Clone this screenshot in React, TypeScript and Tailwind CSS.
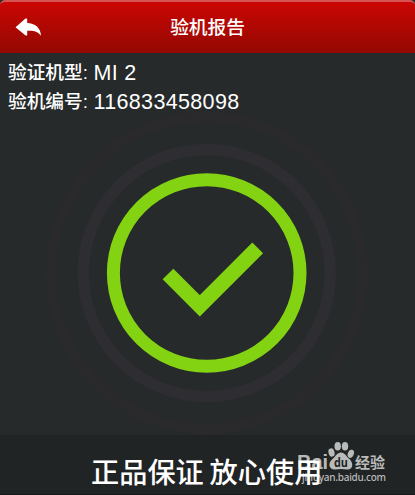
const CHECK_COLOR = '#83d313';

const details = [
  { label: '验证机型', value: 'MI 2' },
  { label: '验机编号', value: '116833458098' },
];

function BackIcon() {
  return (
    <svg width="27" height="20" viewBox="0 0 27 20" fill="#fff" aria-hidden="true">
      <path d="M0.5 9.2 L10.5 0.5 Q12.2 0 12.2 1.5 V5 C20 5.2 25.5 9.5 26 17.8 C22.5 13 18 12.4 12.2 12.8 V16.5 Q12 18.3 10.3 17.3 Z" />
    </svg>
  );
}

function Header() {
  return (
    <header className="h-[53px] shrink-0 rounded-t-[5px] border-t-2 border-[#d55353] bg-linear-to-b from-[#cb0604] to-[#940802] grid grid-cols-[1fr_auto_1fr] items-center">
      <button type="button" aria-label="返回" className="pl-[15px] justify-self-start">
        <BackIcon />
      </button>
      <h1 className="pt-0.5 text-[18.7px] leading-none font-medium text-white">验机报告</h1>
    </header>
  );
}

function VerifiedMark() {
  return (
    <svg width="415" height="323" viewBox="0 112 415 323" fill="none" className="block" aria-hidden="true">
      <circle cx="206.7" cy="273" r="156" stroke="#2a292b" strokeWidth="11" />
      <circle cx="206.7" cy="273" r="123.5" stroke="#2e2d32" strokeWidth="11.5" />
      <circle cx="206.7" cy="273" r="93.3" stroke={CHECK_COLOR} strokeWidth="13" />
      <path d="M168 274 L199.8 305.8 L257.7 247.8" stroke={CHECK_COLOR} strokeWidth="15.2" />
    </svg>
  );
}

function Watermark() {
  return (
    <div className="absolute left-[298px] top-[6px] w-[90px] h-[50px] text-[#b9baba]">
      <svg width="90" height="50" viewBox="0 0 90 50" fill="currentColor" aria-hidden="true">
        <text x="-1" y="27.5" fontSize="20" fontWeight="700" fontFamily="Liberation Sans, sans-serif" textLength="31" lengthAdjust="spacingAndGlyphs">Bai</text>
        <ellipse cx="33.5" cy="11.5" rx="3" ry="4.2" transform="rotate(-15 33.5 11.5)" />
        <ellipse cx="39.7" cy="5.2" rx="3.2" ry="4.3" />
        <ellipse cx="47" cy="5.2" rx="3.2" ry="4.3" />
        <ellipse cx="52.8" cy="12.8" rx="3" ry="4.2" transform="rotate(20 52.8 12.8)" />
        <path d="M43 11.5 C39 11.5 37.5 15.5 34.5 18 C29 22.5 31.5 29 37 28.5 C41 27.8 45 27.8 49 28.5 C55 29 56 22.5 51.5 18 C48 15.5 47 11.5 43 11.5 Z" />
        <text x="36" y="26" fontSize="13" fontWeight="700" fill="#212424" fontFamily="Open Sans, sans-serif" textLength="14" lengthAdjust="spacingAndGlyphs">du</text>
        <text x="57" y="26.5" fontSize="15" fontWeight="700" fontFamily="Noto Sans CJK SC, sans-serif" textLength="30">经验</text>
        <text x="4" y="39.5" fontSize="10" fontWeight="500" fontFamily="Noto Sans, sans-serif" textLength="84">jingyan.baidu.com</text>
      </svg>
    </div>
  );
}

export default function App() {
  return (
    <div className="w-[415px] h-[495px] overflow-hidden flex flex-col bg-[#262a2b] text-white font-['Liberation_Sans','Noto_Sans_CJK_SC',sans-serif]">
      <Header />
      <dl className="h-[59px] shrink-0 pl-2 pt-[6px]">
        {details.map(item => (
          <div key={item.label} className="flex items-center gap-[5.5px] h-[28.5px] text-[18.7px] leading-7">
            <dt className="whitespace-nowrap font-medium">{item.label}:</dt>
            <dd className="text-[21.5px] tracking-[0.35px] whitespace-nowrap">{item.value}</dd>
          </div>
        ))}
      </dl>
      <VerifiedMark />
      <footer className="relative h-[60px] shrink-0 bg-[#212424] border-b border-[#171919]">
        <Watermark />
        <p className="relative pl-[91px] pt-[17px] text-[28.2px] leading-[42px] font-medium [word-spacing:-2px] whitespace-nowrap">正品保证 放心使用</p>
      </footer>
    </div>
  );
}
